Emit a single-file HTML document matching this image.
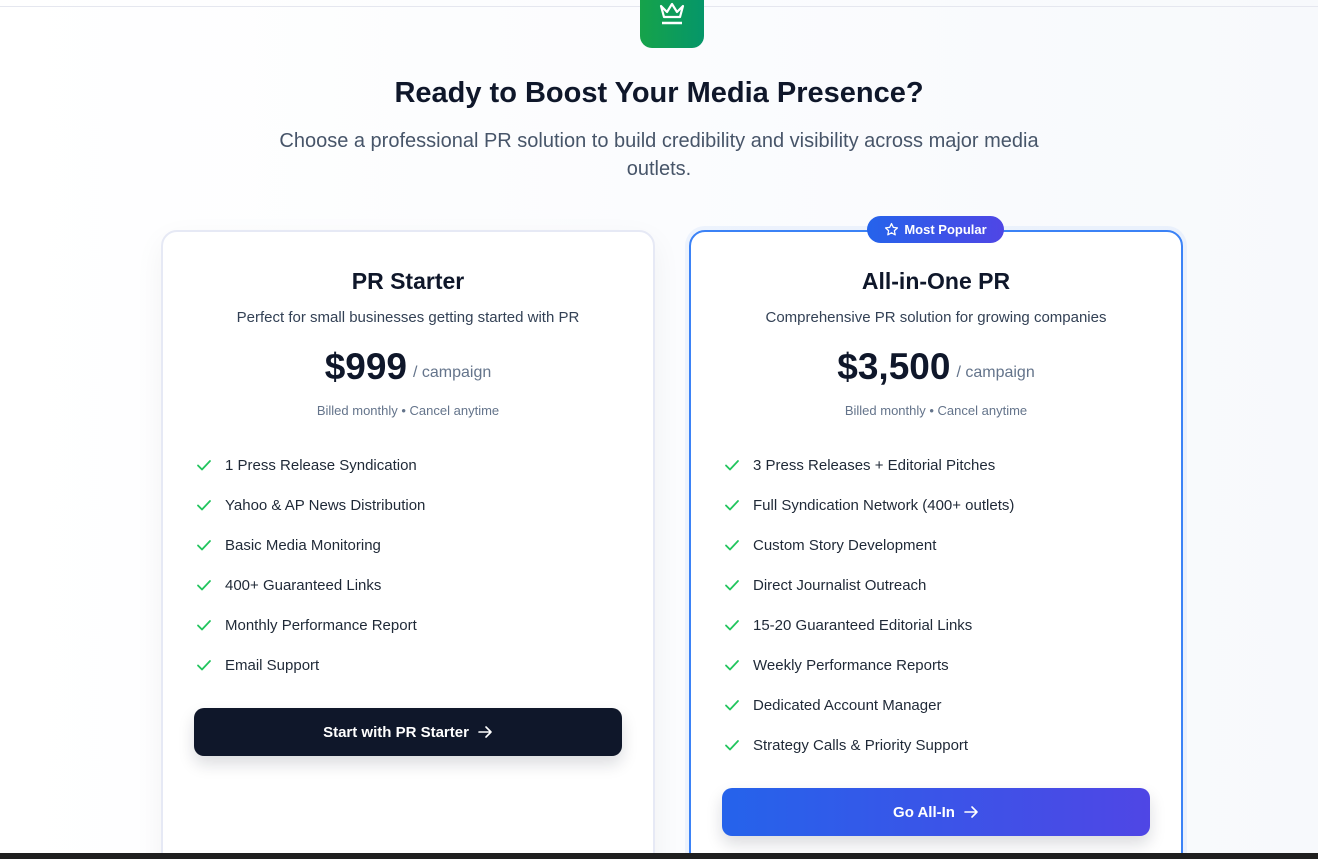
<!DOCTYPE html>
<html><head><meta charset="utf-8"><style>
*{box-sizing:border-box;margin:0;padding:0}
html,body{width:1318px;height:859px;overflow:hidden}
body{font-family:"Liberation Sans",sans-serif;background:linear-gradient(90deg,#fff 0%,#fbfcfe 50%,#f7f9fc 100%);position:relative;color:#0f172a}
.wrap{position:absolute;left:0;top:0;width:1318px;height:859px;overflow:hidden}
.topline{position:absolute;left:0;top:6px;width:1318px;height:1px;background:#e5e7ef}
.logo{position:absolute;left:640px;top:-16px;width:64px;height:64px;border-radius:12px;background:linear-gradient(90deg,#16a34a,#059669)}
h1{position:absolute;top:77px;width:100%;text-align:center;font-size:29px;font-weight:700;color:#0f172a}
.sub{position:absolute;top:127px;left:269px;width:780px;text-align:center;font-size:20px;line-height:28px;color:#475569}
.card{position:absolute;top:230px;width:494px;height:660px;background:#fff;border-radius:16px;border:2px solid #e6e9f5;text-align:center}
.c1{left:161px;box-shadow:0 10px 30px rgba(15,23,42,.05)}
.c2{left:689px;border-color:#3b82f6;box-shadow:0 0 0 4px rgba(59,130,246,.07)}
.card h2{position:absolute;top:36px;width:100%;font-size:23px;font-weight:700}
.card .d{position:absolute;top:77px;width:100%;font-size:15px;color:#334155}
.price{position:absolute;top:114px;width:100%;font-size:15px}
.price b{font-size:37px;font-weight:700;color:#0f172a;vertical-align:middle}
.price span{font-size:16px;color:#64748b;margin-left:6px;vertical-align:-6px}
.bill{position:absolute;top:171px;width:100%;font-size:13px;color:#64748b}
ul{position:absolute;top:213px;left:33px;list-style:none;text-align:left}
li{height:40px;font-size:15px;color:#1f2937;display:flex;align-items:center}
li svg{margin-right:12px;margin-left:-1px}
.btn{position:absolute;left:31px;width:428px;height:48px;border-radius:10px;color:#fff;font-size:15px;font-weight:700;display:flex;align-items:center;justify-content:center;gap:8px;box-shadow:0 8px 16px rgba(15,23,42,.15)}
.b1{top:476px;background:#0f172a}
.b2{top:556px;background:linear-gradient(90deg,#2563eb,#4f46e5)}
.badge{position:absolute;left:867px;top:216px;width:137px;height:27px;border-radius:14px;background:linear-gradient(90deg,#2563eb,#4f46e5);color:#fff;font-size:13px;font-weight:700;display:flex;align-items:center;justify-content:center;gap:5px}
.bar{position:absolute;left:0;top:853px;width:1318px;height:6px;background:#1f1f1f}
</style></head><body><div class="wrap">
<div class="topline"></div>
<div class="logo"><svg width="64" height="64" viewBox="0 0 64 64" style="position:absolute;left:0;top:0"><path d="M21 22 L24 33 H40 L43 22 L37 28 L32 20 L27 28 Z" fill="none" stroke="#fff" stroke-width="2.2" stroke-linejoin="round"/><path d="M22 39 H42" stroke="#fff" stroke-width="2.4"/></svg></div>
<h1>Ready to Boost Your Media Presence?</h1>
<div class="sub">Choose a professional PR solution to build credibility and visibility across major media outlets.</div>

<div class="card c1">
<h2>PR Starter</h2>
<div class="d">Perfect for small businesses getting started with PR</div>
<div class="price"><b>$999</b><span>/ campaign</span></div>
<div class="bill">Billed monthly • Cancel anytime</div>
<ul>
<li><svg width="18" height="18" viewBox="0 0 18 18"><path d="M3 9.5l4 4 8-8.5" fill="none" stroke="#22c55e" stroke-width="1.8" stroke-linecap="round" stroke-linejoin="round"/></svg>1 Press Release Syndication</li>
<li><svg width="18" height="18" viewBox="0 0 18 18"><path d="M3 9.5l4 4 8-8.5" fill="none" stroke="#22c55e" stroke-width="1.8" stroke-linecap="round" stroke-linejoin="round"/></svg>Yahoo &amp; AP News Distribution</li>
<li><svg width="18" height="18" viewBox="0 0 18 18"><path d="M3 9.5l4 4 8-8.5" fill="none" stroke="#22c55e" stroke-width="1.8" stroke-linecap="round" stroke-linejoin="round"/></svg>Basic Media Monitoring</li>
<li><svg width="18" height="18" viewBox="0 0 18 18"><path d="M3 9.5l4 4 8-8.5" fill="none" stroke="#22c55e" stroke-width="1.8" stroke-linecap="round" stroke-linejoin="round"/></svg>400+ Guaranteed Links</li>
<li><svg width="18" height="18" viewBox="0 0 18 18"><path d="M3 9.5l4 4 8-8.5" fill="none" stroke="#22c55e" stroke-width="1.8" stroke-linecap="round" stroke-linejoin="round"/></svg>Monthly Performance Report</li>
<li><svg width="18" height="18" viewBox="0 0 18 18"><path d="M3 9.5l4 4 8-8.5" fill="none" stroke="#22c55e" stroke-width="1.8" stroke-linecap="round" stroke-linejoin="round"/></svg>Email Support</li>
</ul>
<div class="btn b1">Start with PR Starter <svg width="16" height="16" viewBox="0 0 16 16"><path d="M2 8h12M9 3l5 5-5 5" fill="none" stroke="#fff" stroke-width="1.6" stroke-linecap="round" stroke-linejoin="round"/></svg></div>
</div>

<div class="card c2">
<h2>All-in-One PR</h2>
<div class="d">Comprehensive PR solution for growing companies</div>
<div class="price"><b>$3,500</b><span>/ campaign</span></div>
<div class="bill">Billed monthly • Cancel anytime</div>
<ul>
<li><svg width="18" height="18" viewBox="0 0 18 18"><path d="M3 9.5l4 4 8-8.5" fill="none" stroke="#22c55e" stroke-width="1.8" stroke-linecap="round" stroke-linejoin="round"/></svg>3 Press Releases + Editorial Pitches</li>
<li><svg width="18" height="18" viewBox="0 0 18 18"><path d="M3 9.5l4 4 8-8.5" fill="none" stroke="#22c55e" stroke-width="1.8" stroke-linecap="round" stroke-linejoin="round"/></svg>Full Syndication Network (400+ outlets)</li>
<li><svg width="18" height="18" viewBox="0 0 18 18"><path d="M3 9.5l4 4 8-8.5" fill="none" stroke="#22c55e" stroke-width="1.8" stroke-linecap="round" stroke-linejoin="round"/></svg>Custom Story Development</li>
<li><svg width="18" height="18" viewBox="0 0 18 18"><path d="M3 9.5l4 4 8-8.5" fill="none" stroke="#22c55e" stroke-width="1.8" stroke-linecap="round" stroke-linejoin="round"/></svg>Direct Journalist Outreach</li>
<li><svg width="18" height="18" viewBox="0 0 18 18"><path d="M3 9.5l4 4 8-8.5" fill="none" stroke="#22c55e" stroke-width="1.8" stroke-linecap="round" stroke-linejoin="round"/></svg>15-20 Guaranteed Editorial Links</li>
<li><svg width="18" height="18" viewBox="0 0 18 18"><path d="M3 9.5l4 4 8-8.5" fill="none" stroke="#22c55e" stroke-width="1.8" stroke-linecap="round" stroke-linejoin="round"/></svg>Weekly Performance Reports</li>
<li><svg width="18" height="18" viewBox="0 0 18 18"><path d="M3 9.5l4 4 8-8.5" fill="none" stroke="#22c55e" stroke-width="1.8" stroke-linecap="round" stroke-linejoin="round"/></svg>Dedicated Account Manager</li>
<li><svg width="18" height="18" viewBox="0 0 18 18"><path d="M3 9.5l4 4 8-8.5" fill="none" stroke="#22c55e" stroke-width="1.8" stroke-linecap="round" stroke-linejoin="round"/></svg>Strategy Calls &amp; Priority Support</li>
</ul>
<div class="btn b2">Go All-In <svg width="16" height="16" viewBox="0 0 16 16"><path d="M2 8h12M9 3l5 5-5 5" fill="none" stroke="#fff" stroke-width="1.6" stroke-linecap="round" stroke-linejoin="round"/></svg></div>
</div>
<div class="badge"><svg width="15" height="15" viewBox="0 0 24 24"><path d="M12 2.5l2.9 6.1 6.6.8-4.9 4.6 1.3 6.6L12 17.3l-5.9 3.3 1.3-6.6-4.9-4.6 6.6-.8z" fill="none" stroke="#fff" stroke-width="2" stroke-linejoin="round"/></svg>Most Popular</div>
<div class="bar"></div>
</div></body></html>
